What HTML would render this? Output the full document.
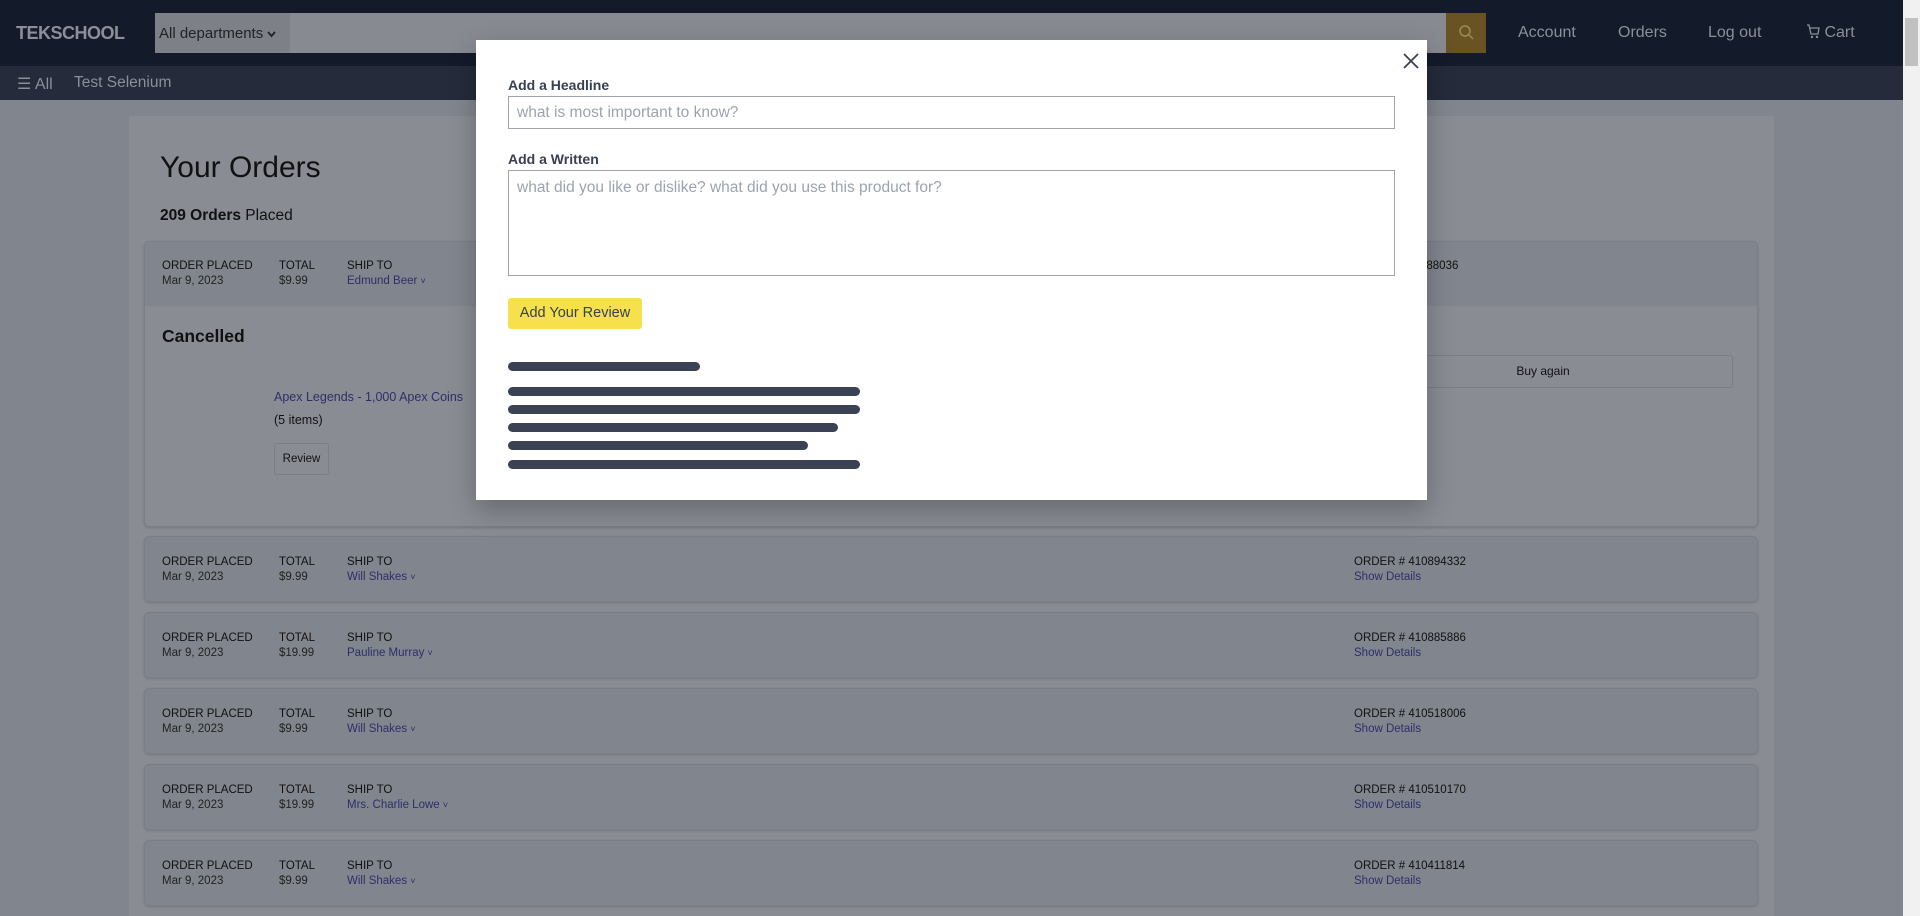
<!DOCTYPE html>
<html><head><meta charset="utf-8"><style>
*{box-sizing:border-box;margin:0;padding:0}
body{width:1920px;height:916px;overflow:hidden;background:#81858d;font-family:"Liberation Sans",sans-serif;position:relative;color:#111}
.abs{position:absolute}
.top{left:0;top:0;width:1903px;height:66px;background:#131a2a}
.sub{left:0;top:66px;width:1903px;height:34px;background:#252b3b}
.logo{left:16px;top:23px;color:#8a8f98;font-weight:bold;font-size:18px;letter-spacing:-0.5px}
.sel{left:155px;top:13px;width:135px;height:40px;background:#7d8187;color:#222;font-size:15px;padding:12px 4px}
.inp{left:290px;top:13px;width:1156px;height:40px;background:#878a91}
.btn{left:1446px;top:13px;width:40px;height:40px;background:#6a5322}
.nav{top:24px;color:#8a8f98;font-size:16px}
.sb{left:1903px;top:0;width:17px;height:916px;background:#f1f1f1}
.main{left:129px;top:116px;width:1645px;height:800px;background:#898c93}
.card{left:144px;width:1614px;border:1px solid #7a7e86;border-radius:5px;background:#81858d;box-shadow:0 1px 2px rgba(0,0,0,.15)}
.lbl{font-size:11.5px;color:#111;line-height:15px}
.val{font-size:11.5px;color:#222;line-height:15px}
.lnk{font-size:11.5px;color:#2e2f6a;line-height:15px}
.car{font-size:9px}
.modal{left:476px;top:40px;width:951px;height:460px;background:#fff;box-shadow:0 10px 25px rgba(0,0,0,.25)}
.ml{font-size:14px;font-weight:bold;color:#374151}
.bar{height:9px;border-radius:5px;background:#3b4253}
</style></head><body>
<div class="abs top"></div>
<div class="abs sub"></div>
<div class="abs logo">TEKSCHOOL</div>
<div class="abs sel">All departments <svg width="9" height="7"><path d="M1 1l3.5 4L8 1" stroke="#222" stroke-width="1.8" fill="none"/></svg></div>
<div class="abs inp"></div>
<div class="abs btn"><svg width="40" height="40"><circle cx="19" cy="18" r="5" stroke="#9a8a5a" stroke-width="1.5" fill="none"/><path d="M23 22l4 4" stroke="#9a8a5a" stroke-width="1.5"/></svg></div>
<div class="abs nav" style="left:1518px">Account</div>
<div class="abs nav" style="left:1618px">Orders</div>
<div class="abs nav" style="left:1708px">Log out</div>
<div class="abs nav" style="left:1806px"><svg width="14" height="15" style="vertical-align:-2px"><path d="M1 1h2l2 9h7l1-6H4" stroke="#8a8f98" stroke-width="1.3" fill="none"/><circle cx="6" cy="13" r="1.2" fill="#8a8f98"/><circle cx="11" cy="13" r="1.2" fill="#8a8f98"/></svg> Cart</div>
<div class="abs" style="left:17px;top:74px;color:#8a8f98;font-size:16px">☰ All</div>
<div class="abs" style="left:74px;top:74px;color:#8a8f98;font-size:15.5px">Test Selenium</div>
<div class="abs sb"><div style="position:absolute;left:2px;top:18px;width:13px;height:48px;background:#c1c1c1"></div></div>
<div class="abs main"></div>
<div class="abs" style="left:160px;top:151px;font-size:30px;color:#111">Your Orders</div>
<div class="abs" style="left:160px;top:207px;font-size:15.5px"><b>209 Orders</b> Placed</div>

<div class="abs card" style="top:241px;height:286px;background:#898c93">
<div style="height:64px;background:#81858d;border-radius:5px 5px 0 0"></div>
</div>
<div class="abs lbl" style="left:162px;top:259px">ORDER PLACED<br><span class="val">Mar 9, 2023</span></div>
<div class="abs lbl" style="left:279px;top:259px">TOTAL<br><span class="val">$9.99</span></div>
<div class="abs lbl" style="left:347px;top:259px">SHIP TO<br><span class="lnk">Edmund Beer <span class="car">˅</span></span></div>
<div class="abs lbl" style="left:1420px;top:259px">488036</div>
<div class="abs" style="left:162px;top:326px;font-size:17.5px;font-weight:bold">Cancelled</div>
<div class="abs" style="left:274px;top:390px;font-size:12.5px;color:#2e2f6a">Apex Legends - 1,000 Apex Coins</div>
<div class="abs" style="left:274px;top:413px;font-size:12.5px">(5 items)</div>
<div class="abs" style="left:274px;top:443px;width:55px;height:32px;border:1px solid #7a7e86;border-radius:3px;font-size:11.5px;text-align:center;line-height:30px;background:#898c93">Review</div>
<div class="abs" style="left:1353px;top:355px;width:380px;height:33px;border:1px solid #7a7e86;border-radius:3px;font-size:12px;text-align:center;line-height:31px;background:#898c93">Buy again</div>

<div class="abs card" style="top:536px;height:66px"></div>
<div class="abs card" style="top:612px;height:66px"></div>
<div class="abs card" style="top:688px;height:66px"></div>
<div class="abs card" style="top:764px;height:66px"></div>
<div class="abs card" style="top:840px;height:66px"></div>

<div class="abs lbl" style="left:162px;top:555px">ORDER PLACED<br><span class="val">Mar 9, 2023</span></div>
<div class="abs lbl" style="left:279px;top:555px">TOTAL<br><span class="val">$9.99</span></div>
<div class="abs lbl" style="left:347px;top:555px">SHIP TO<br><span class="lnk">Will Shakes <span class="car">˅</span></span></div>
<div class="abs lbl" style="left:1354px;top:555px">ORDER # 410894332<br><span class="lnk">Show Details</span></div>

<div class="abs lbl" style="left:162px;top:631px">ORDER PLACED<br><span class="val">Mar 9, 2023</span></div>
<div class="abs lbl" style="left:279px;top:631px">TOTAL<br><span class="val">$19.99</span></div>
<div class="abs lbl" style="left:347px;top:631px">SHIP TO<br><span class="lnk">Pauline Murray <span class="car">˅</span></span></div>
<div class="abs lbl" style="left:1354px;top:631px">ORDER # 410885886<br><span class="lnk">Show Details</span></div>

<div class="abs lbl" style="left:162px;top:707px">ORDER PLACED<br><span class="val">Mar 9, 2023</span></div>
<div class="abs lbl" style="left:279px;top:707px">TOTAL<br><span class="val">$9.99</span></div>
<div class="abs lbl" style="left:347px;top:707px">SHIP TO<br><span class="lnk">Will Shakes <span class="car">˅</span></span></div>
<div class="abs lbl" style="left:1354px;top:707px">ORDER # 410518006<br><span class="lnk">Show Details</span></div>

<div class="abs lbl" style="left:162px;top:783px">ORDER PLACED<br><span class="val">Mar 9, 2023</span></div>
<div class="abs lbl" style="left:279px;top:783px">TOTAL<br><span class="val">$19.99</span></div>
<div class="abs lbl" style="left:347px;top:783px">SHIP TO<br><span class="lnk">Mrs. Charlie Lowe <span class="car">˅</span></span></div>
<div class="abs lbl" style="left:1354px;top:783px">ORDER # 410510170<br><span class="lnk">Show Details</span></div>

<div class="abs lbl" style="left:162px;top:859px">ORDER PLACED<br><span class="val">Mar 9, 2023</span></div>
<div class="abs lbl" style="left:279px;top:859px">TOTAL<br><span class="val">$9.99</span></div>
<div class="abs lbl" style="left:347px;top:859px">SHIP TO<br><span class="lnk">Will Shakes <span class="car">˅</span></span></div>
<div class="abs lbl" style="left:1354px;top:859px">ORDER # 410411814<br><span class="lnk">Show Details</span></div>

<div class="abs modal">
<svg class="abs" style="left:926px;top:12px" width="18" height="18"><path d="M2 2L16 16M16 2L2 16" stroke="#374151" stroke-width="1.8"/></svg>
<div class="abs ml" style="left:32px;top:37px">Add a Headline</div>
<div class="abs" style="left:32px;top:56px;width:887px;height:33px;border:1px solid #a0a4ad;font-size:15.5px;color:#9ca3af;padding:7px 8px">what is most important to know?</div>
<div class="abs ml" style="left:32px;top:111px">Add a Written</div>
<div class="abs" style="left:32px;top:130px;width:887px;height:106px;border:1px solid #a0a4ad;font-size:15.5px;color:#9ca3af;padding:8px 8px">what did you like or dislike? what did you use this product for?</div>
<div class="abs" style="left:32px;top:258px;width:134px;height:31px;background:#f6e14c;border-radius:3px;font-size:14.5px;color:#374151;text-align:center;line-height:31px">Add Your Review</div>
<div class="abs bar" style="left:32px;top:322px;width:192px"></div>
<div class="abs bar" style="left:32px;top:347px;width:352px"></div>
<div class="abs bar" style="left:32px;top:365px;width:352px"></div>
<div class="abs bar" style="left:32px;top:383px;width:330px"></div>
<div class="abs bar" style="left:32px;top:401px;width:300px"></div>
<div class="abs bar" style="left:32px;top:420px;width:352px"></div>
</div>
</body></html>
